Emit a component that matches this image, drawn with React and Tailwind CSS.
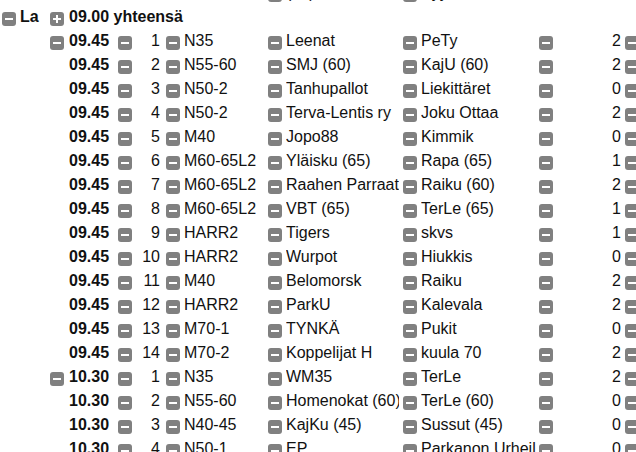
import React from "react";

const rows945 = [
  [1, "N35", "Leenat", "PeTy", 2],
  [2, "N55-60", "SMJ (60)", "KajU (60)", 2],
  [3, "N50-2", "Tanhupallot", "Liekittäret", 0],
  [4, "N50-2", "Terva-Lentis ry", "Joku Ottaa", 2],
  [5, "M40", "Jopo88", "Kimmik", 0],
  [6, "M60-65L2", "Yläisku (65)", "Rapa (65)", 1],
  [7, "M60-65L2", "Raahen Parraati (60)", "Raiku (60)", 2],
  [8, "M60-65L2", "VBT (65)", "TerLe (65)", 1],
  [9, "HARR2", "Tigers", "skvs", 1],
  [10, "HARR2", "Wurpot", "Hiukkis", 0],
  [11, "M40", "Belomorsk", "Raiku", 2],
  [12, "HARR2", "ParkU", "Kalevala", 2],
  [13, "M70-1", "TYNKÄ", "Pukit", 0],
  [14, "M70-2", "Koppelijat H", "kuula 70", 2],
];

const rows1030 = [
  [1, "N35", "WM35", "TerLe", 2],
  [2, "N55-60", "Homenokat (60)", "TerLe (60)", 0],
  [3, "N40-45", "KajKu (45)", "Sussut (45)", 0],
  [4, "N50-1", "EP", "Parkanon Urheilijat", 0],
];

function Toggle({ plus }) {
  return (
    <span className="relative mt-[4px] flex h-[14px] w-[14px] shrink-0 items-center justify-center rounded-[3px] bg-[#808080]">
      <span className="h-[2px] w-[8px] bg-white" />
      {plus && <span className="absolute h-[8px] w-[2px] bg-white" />}
    </span>
  );
}

function MatchRow({ time, first, row }) {
  const [no, cls, home, away, score] = row;
  return (
    <div className="flex h-[24px] items-center">
      <div className="w-[50px] shrink-0" />
      <div className="flex w-[19px] shrink-0">{first && <Toggle />}</div>
      <div className="w-[49px] shrink-0 font-bold">{time}</div>
      <Toggle />
      <div className="w-[34px] shrink-0 pr-[6px] text-right">{no}</div>
      <Toggle />
      <div className="ml-[4px] w-[84px] shrink-0 overflow-hidden whitespace-nowrap">{cls}</div>
      <Toggle />
      <div className="ml-[4px] mr-[4px] w-[113px] shrink-0 overflow-hidden whitespace-nowrap">{home}</div>
      <Toggle />
      <div className="ml-[4px] mr-[3px] w-[115px] shrink-0 overflow-hidden whitespace-nowrap">{away}</div>
      <Toggle />
      <div className="w-[72px] shrink-0 pr-[4px] text-right">{score}</div>
      <Toggle />
    </div>
  );
}

export default function App() {
  return (
    <div className="h-[452px] w-[636px] overflow-hidden bg-white font-['Liberation_Sans',Arial,sans-serif] text-[16px] text-[#111]">
      <div className="-mt-[19px] w-[720px]">
        <div className="flex h-[24px] items-center">
          <div className="w-[268px] shrink-0" />
          <Toggle />
          <div className="ml-[4px] mr-[4px] w-[113px] shrink-0 overflow-hidden whitespace-nowrap">(60)</div>
          <Toggle />
          <div className="ml-[4px] w-[115px] shrink-0 overflow-hidden whitespace-nowrap">Kyy</div>
        </div>
        <div className="flex h-[24px] items-center">
          <div className="ml-[2px] flex w-[18px] shrink-0">
            <Toggle />
          </div>
          <span className="w-[30px] shrink-0 font-bold">La</span>
          <div className="flex w-[19px] shrink-0">
            <Toggle plus />
          </div>
          <span className="font-bold">09.00 yhteensä</span>
        </div>
        {rows945.map((r, i) => (
          <MatchRow key={"a" + i} time="09.45" first={i === 0} row={r} />
        ))}
        {rows1030.map((r, i) => (
          <MatchRow key={"b" + i} time="10.30" first={i === 0} row={r} />
        ))}
      </div>
    </div>
  );
}
